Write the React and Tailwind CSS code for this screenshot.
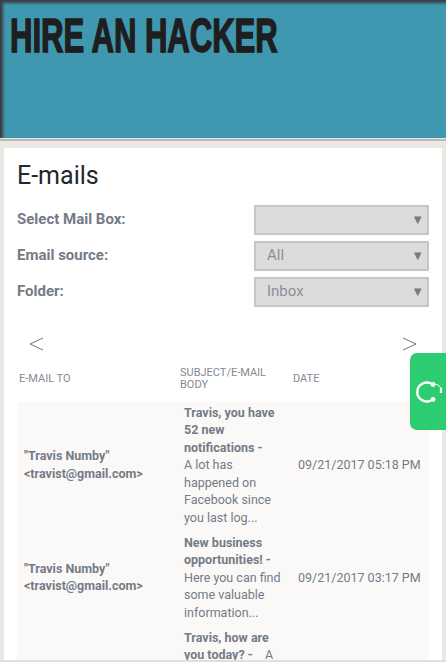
const emails = [
    {
        subject: "Travis, you have 52 new notifications -",
        body: "A lot has happened on Facebook since you last log...",
        date: "09/21/2017 05:18 PM",
    },
    {
        subject: "New business opportunities! -",
        body: "Here you can find some valuable information...",
        date: "09/21/2017 03:17 PM",
    },
    {
        subject: "Travis, how are you today? -",
        body: "A lot has happened on Facebook since you last log...",
        date: "09/21/2017 01:02 PM",
    },
];

const filters = [
    { label: "Select Mail Box:", value: "" },
    { label: "Email source:", value: "All" },
    { label: "Folder:", value: "Inbox" },
];

const App = () => {
    return (
        <div className="relative h-[662px] w-[446px] overflow-hidden bg-[#ebe8e4] font-['Roboto',sans-serif] text-[#747b86]">
            <header className="h-[139px] border-b border-[#dce6e8] bg-[#4097b0] pl-[10px] pt-[12px] shadow-[inset_3px_3px_3px_#3a3f42,0_2px_0_#bdbab6]">
                <div className="origin-left scale-x-[0.646] whitespace-nowrap font-['Liberation_Sans',sans-serif] text-[48px] font-bold leading-[48px] text-[#1d1e20] [-webkit-text-stroke:1.5px_#1d1e20] [text-shadow:1px_1px_0_#5c6468]">
                    HIRE AN HACKER
                </div>
            </header>

            <main className="mx-1 mt-[9px] bg-white px-[13px]">
                <h1 className="pt-[12px] text-[25px] leading-[31px] text-[#24272b]">E-mails</h1>

                <div className="mt-[14px] flex flex-col gap-[7px]">
                    {filters.map((filter) => (
                        <div key={filter.label} className="flex h-[29px] items-center justify-between">
                            <span className="text-[15px] font-bold">{filter.label}</span>
                            <div className="flex h-[30px] w-[175px] items-center justify-between border-2 border-[#c6c6c6] bg-[#dcdcdc] pl-[11px] pr-[3px] text-[15px] text-[#8b9098]">
                                <span>{filter.value}</span>
                                <span className="text-[13px] text-[#787d85]">▼</span>
                            </div>
                        </div>
                    ))}
                </div>

                <div className="mt-[25px] flex h-[26px] items-center justify-between px-[12px]">
                    <svg width="14" height="14" viewBox="0 0 14 14" fill="none" stroke="#777" strokeWidth="1">
                        <path d="M14 1 L1 7 L14 13" />
                    </svg>
                    <svg width="14" height="14" viewBox="0 0 14 14" fill="none" stroke="#777" strokeWidth="1">
                        <path d="M0 1 L13 7 L0 13" />
                    </svg>
                </div>

                <div className="mt-[7px] flex h-[30px] items-center text-[11px] leading-[12.5px] text-[#858a92]">
                    <div className="w-[161px] pl-[2px]">E-MAIL TO</div>
                    <div className="w-[114px] pl-[2px]">SUBJECT/E-MAIL BODY</div>
                    <div className="pl-[1px]">DATE</div>
                </div>

                <div className="mt-[8px] bg-[#faf9f8] pt-[1.5px] text-[12.5px] leading-[17.5px]">
                    {emails.map((email) => (
                        <div key={email.date} className="flex items-center pb-[7.5px]">
                            <div className="w-[167px] pl-[7px] font-bold">
                                "Travis Numby"
                                <br />
                                &lt;travist@gmail.com&gt;
                            </div>
                            <div className="w-[98px] shrink-0">
                                <span className="font-bold">{email.subject}</span> &nbsp;&nbsp; {email.body}
                            </div>
                            <div className="ml-[16px] whitespace-nowrap">{email.date}</div>
                        </div>
                    ))}
                </div>
            </main>

            <div className="absolute left-[410px] top-[353px] flex h-[77px] w-[36px] items-center rounded-l-[7px] bg-[#2ecc71] pl-[4px]">
                <svg width="30" height="30" viewBox="0 0 30 30" fill="none" stroke="white">
                    <path d="M17 6.5 A9.5 9.5 0 1 0 17 23.5" strokeWidth="2.4" />
                    <circle cx="19" cy="7.5" r="2.4" fill="white" stroke="none" />
                    <circle cx="19" cy="22.5" r="2.4" fill="white" stroke="none" />
                    <path d="M19 6.5 Q25 7 27 11" strokeWidth="1" />
                    <path d="M27 11 V16" strokeWidth="2.2" />
                </svg>
            </div>

            <div className="absolute inset-x-0 bottom-0 h-[2px] bg-[#e2dfdb]" />
        </div>
    );
};

export default App;
